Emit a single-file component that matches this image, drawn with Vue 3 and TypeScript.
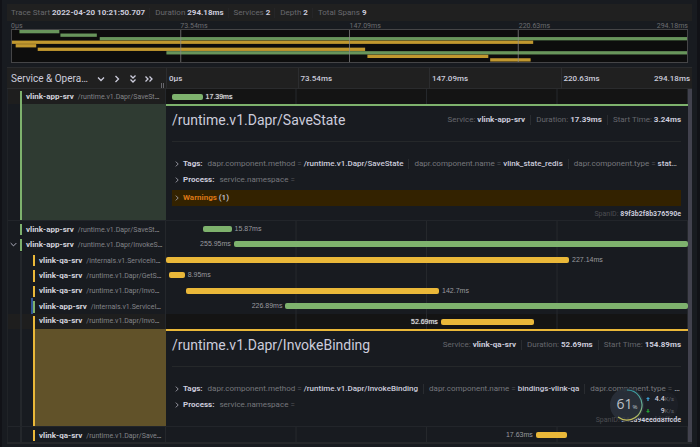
<script setup lang="ts">
interface Tag {
  key: string
  value: string
}

interface SpanDetail {
  title: string
  start: string
  tags: Tag[]
  warnings: number
  spanId: string
}

interface Span {
  service: string
  operation: string
  level: number
  color: 'green' | 'yellow'
  start: number
  duration: number
  labelSide: 'left' | 'right'
  expandable?: boolean
  linked?: boolean
  detail?: SpanDetail
}

const total = 294.18

const stats = [
  { label: 'Trace Start', value: '2022-04-20 10:21:50.707' },
  { label: 'Duration', value: '294.18ms' },
  { label: 'Services', value: '2' },
  { label: 'Depth', value: '2' },
  { label: 'Total Spans', value: '9' },
]

const ticks = ['0μs', '73.54ms', '147.09ms', '220.63ms']
const lastTick = '294.18ms'

const spans: Span[] = [
  {
    service: 'vlink-app-srv', operation: '/runtime.v1.Dapr/SaveSt', level: 0, color: 'green',
    start: 3.24, duration: 17.39, labelSide: 'right',
    detail: {
      title: '/runtime.v1.Dapr/SaveState',
      start: '3.24ms',
      tags: [
        { key: 'dapr.component.method', value: '/runtime.v1.Dapr/SaveState' },
        { key: 'dapr.component.name', value: 'vlink_state_redis' },
        { key: 'dapr.component.type', value: 'stat…' },
      ],
      warnings: 1,
      spanId: '89f3b2f8b376590e',
    },
  },
  { service: 'vlink-app-srv', operation: '/runtime.v1.Dapr/SaveSt', level: 0, color: 'green', start: 21.1, duration: 15.87, labelSide: 'right' },
  { service: 'vlink-app-srv', operation: '/runtime.v1.Dapr/InvokeS', level: 0, color: 'green', start: 38.23, duration: 255.95, labelSide: 'left', expandable: true },
  { service: 'vlink-qa-srv', operation: '/internals.v1.ServiceIn', level: 1, color: 'yellow', start: 0, duration: 227.14, labelSide: 'right' },
  { service: 'vlink-qa-srv', operation: '/runtime.v1.Dapr/GetS', level: 1, color: 'yellow', start: 1.6, duration: 8.95, labelSide: 'right' },
  { service: 'vlink-qa-srv', operation: '/runtime.v1.Dapr/Invo', level: 1, color: 'yellow', start: 11.2, duration: 142.7, labelSide: 'right' },
  { service: 'vlink-app-srv', operation: '/internals.v1.ServiceI', level: 1, color: 'green', start: 67.29, duration: 226.89, labelSide: 'left', linked: true },
  {
    service: 'vlink-qa-srv', operation: '/runtime.v1.Dapr/Invo', level: 1, color: 'yellow',
    start: 154.89, duration: 52.69, labelSide: 'left',
    detail: {
      title: '/runtime.v1.Dapr/InvokeBinding',
      start: '154.89ms',
      tags: [
        { key: 'dapr.component.method', value: '/runtime.v1.Dapr/InvokeBinding' },
        { key: 'dapr.component.name', value: 'bindings-vlink-qa' },
        { key: 'dapr.component.type', value: '…' },
      ],
      warnings: 0,
      spanId: '243a94eedd8ffcde',
    },
  },
  { service: 'vlink-qa-srv', operation: '/runtime.v1.Dapr/Save', level: 1, color: 'yellow', start: 208.4, duration: 17.63, labelSide: 'left' },
]

const groups: Span[][] = [spans.slice(0, 1), spans.slice(1, 8), spans.slice(8)]

const pct = (ms: number): string => `${(ms / total) * 100}%`

const labelStyle = (s: Span): Record<string, string> =>
  s.labelSide === 'right' ? { left: pct(s.start + s.duration) } : { right: pct(total - s.start) }
</script>

<template>
  <main class="panel">
    <header class="stats">
      <span v-for="s in stats" :key="s.label" class="stat">{{ s.label }} <b>{{ s.value }}</b></span>
    </header>

    <section class="minimap">
      <div class="mini-ticks">
        <span v-for="t in ticks" :key="t">{{ t }}</span>
        <span class="end">{{ lastTick }}</span>
      </div>
      <svg class="mini-chart" viewBox="0 0 294.18 34" preserveAspectRatio="none">
        <rect
          v-for="(s, i) in spans" :key="i" :class="s.color"
          :x="s.start" :y="i * 3.75" :width="s.duration" height="3.5"
        />
        <line v-for="n in 3" :key="n" class="mini-line" :x1="(total * n) / 4" :x2="(total * n) / 4" y1="0" y2="34" />
      </svg>
    </section>

    <section class="trace">
      <div class="head">
        <div class="head-name">
          <h2>Service &amp; Opera…</h2>
          <div class="tools">
            <button type="button" aria-label="Expand +1"><svg viewBox="0 0 10 10"><path d="M2 3.5 5 6.5 8 3.5" /></svg></button>
            <button type="button" aria-label="Collapse +1"><svg viewBox="0 0 10 10"><path d="M3.5 2 6.5 5 3.5 8" /></svg></button>
            <button type="button" aria-label="Expand all"><svg viewBox="0 0 10 10"><path d="M2.5 1.5 5 4 7.5 1.5M2.5 5.5 5 8 7.5 5.5" /></svg></button>
            <button type="button" aria-label="Collapse all"><svg viewBox="0 0 10 10"><path d="M1.5 2.5 4 5 1.5 7.5M5.5 2.5 8 5 5.5 7.5" /></svg></button>
          </div>
          <i class="grip"></i>
        </div>
        <div class="head-ticks">
          <span v-for="t in ticks" :key="t">{{ t }}</span>
          <span class="end">{{ lastTick }}</span>
        </div>
      </div>

      <div class="body">
        <div class="rows">
          <div v-for="(group, g) in groups" :key="g" class="group">
            <div :class="['spans', { many: group.length > 1 }]">
              <div v-for="(s, i) in group" :key="i" :class="['row', s.color, `level-${s.level}`, { open: s.detail }]">
                <div class="name">
                  <span class="gutter">
                    <button v-if="s.expandable" type="button" class="toggle" aria-label="Toggle children">
                      <svg viewBox="0 0 10 10"><path d="M1 3 5 7 9 3" /></svg>
                    </button>
                  </span>
                  <span v-if="s.level" :class="['guide', { linked: s.linked }]"></span>
                  <a href="#" class="label"><b>{{ s.service }}</b><small>{{ s.operation }}<em>…</em></small></a>
                </div>
                <div class="view">
                  <span class="bar" :style="{ left: pct(s.start), width: pct(s.duration) }"></span>
                  <span :class="['time', s.labelSide]" :style="labelStyle(s)">{{ s.duration }}ms</span>
                </div>
              </div>
            </div>

            <template v-for="(s, i) in group" :key="i">
              <div v-if="s.detail" :class="['detail', s.color, `level-${s.level}`]">
                <div class="name">
                  <span class="gutter"></span>
                  <span v-if="s.level" class="guide"></span>
                  <span class="fill"></span>
                </div>
                <article>
                  <div class="title">
                    <h3>{{ s.detail.title }}</h3>
                    <ul>
                      <li>Service: <b>{{ s.service }}</b></li>
                      <li>Duration: <b>{{ s.duration }}ms</b></li>
                      <li>Start Time: <b>{{ s.detail.start }}</b></li>
                    </ul>
                  </div>
                  <button type="button" class="fold">
                    <svg viewBox="0 0 10 10"><path d="M3 1 7 5 3 9" /></svg>
                    <strong>Tags:</strong>
                    <span v-for="t in s.detail.tags" :key="t.key" class="tag">{{ t.key }} <i>=</i> <b>{{ t.value }}</b></span>
                  </button>
                  <button type="button" class="fold">
                    <svg viewBox="0 0 10 10"><path d="M3 1 7 5 3 9" /></svg>
                    <strong>Process:</strong>
                    <span class="tag">service.namespace <i>=</i></span>
                  </button>
                  <button v-if="s.detail.warnings" type="button" class="fold warn">
                    <svg viewBox="0 0 10 10"><path d="M3 1 7 5 3 9" /></svg>
                    <span><strong>Warnings</strong> ({{ s.detail.warnings }})</span>
                  </button>
                  <footer>SpanID: <b>{{ s.detail.spanId }}</b></footer>
                </article>
              </div>
            </template>
          </div>
        </div>
        <div class="scroll"></div>
      </div>
    </section>

    <aside class="monitor">
      <div class="dial">
        <svg viewBox="0 0 34 34">
          <defs>
            <linearGradient id="ring" x1="0" y1="0" x2="0" y2="1">
              <stop offset="0" stop-color="#35a0a8" />
              <stop offset="0.55" stop-color="#6fae8c" />
              <stop offset="1" stop-color="#c6bd55" />
            </linearGradient>
          </defs>
          <path d="M17 2A15 15 0 1 1 8 29" />
        </svg>
        <span>61<small>%</small></span>
      </div>
      <div class="rates">
        <p><svg viewBox="0 0 6 6" class="up"><path d="M3 0 6 3H4V6H2V3H0Z" /></svg><b>4.4</b><small>K/s</small></p>
        <p><svg viewBox="0 0 6 6" class="down"><path d="M3 6 0 3H2V0H4V3H6Z" /></svg><b>9</b><small>K/s</small></p>
      </div>
    </aside>
  </main>
</template>

<style>
body {
  margin: 0;
  background: #111217;
}
</style>

<style scoped>
* {
  box-sizing: border-box;
}
.panel {
  position: relative;
  margin: 0 3px 0 2px;
  padding: 4px 5px 3px;
  background: #181b20;
  color: #ccccdc;
  font: 8px/10px Roboto, sans-serif;
}
h2, h3, p, ul {
  margin: 0;
  padding: 0;
  font-weight: 400;
}
button {
  margin: 0;
  padding: 0;
  border: 0;
  background: none;
  color: inherit;
  font: inherit;
  text-align: left;
}
svg {
  display: block;
  fill: none;
  stroke: currentColor;
}
b, strong {
  font-weight: 500;
}
.stats {
  display: flex;
  align-items: center;
  height: 17px;
  padding-left: 4px;
  background: #202020;
  color: #69696e;
}
.stat + .stat {
  margin-left: 4px;
  padding-left: 5px;
  border-left: 1px solid #252527;
}
.stats b {
  color: #ccccdc;
  font-weight: 700;
}
.minimap {
  padding: 0 4px;
}
.mini-ticks, .head-ticks {
  position: relative;
  display: grid;
  grid-template-columns: repeat(4, 1fr);
}
.mini-ticks {
  height: 8px;
  line-height: 10px;
  font-size: 7px;
  color: #6c6d71;
}
.end {
  position: absolute;
  right: 0;
}
.mini-chart {
  width: 100%;
  height: 34px;
  border: 1px solid #454547;
  background: #0d0d0d;
  stroke: none;
}
.mini-chart .green {
  fill: #68955b;
}
.mini-chart .yellow {
  fill: #c1982f;
}
.mini-line {
  stroke: #8b8b8b;
  stroke-width: 1;
  vector-effect: non-scaling-stroke;
  opacity: 0.7;
}
.trace {
  margin-top: 4px;
  border-bottom: 2px solid #25272a;
}
.head {
  display: grid;
  grid-template-columns: 159px 1fr;
  height: 22px;
  border-top: 1px solid #2a2b2d;
  border-bottom: 1px solid #2a2b2d;
  background: #202020;
}
.head-name {
  position: relative;
  display: flex;
  align-items: center;
  gap: 8px;
  padding-left: 4px;
}
.head h2 {
  font-size: 10px;
  line-height: 20px;
  white-space: nowrap;
}
.tools {
  display: flex;
  gap: 6px;
}
.tools svg {
  width: 10px;
  height: 10px;
  stroke-width: 1.3;
}
.grip {
  position: absolute;
  right: 2px;
  bottom: 1px;
  width: 3px;
  height: 5px;
  border: solid #68686e;
  border-width: 0 1px;
}
.head-ticks {
  font-size: 8px;
  font-weight: 500;
  line-height: 21px;
}
.head-ticks > span {
  padding-left: 2px;
  border-left: 1px solid #2c2d2f;
}
.head-ticks > .end {
  padding-right: 2px;
  border: 0;
}
.body {
  display: flex;
}
.rows {
  flex: 1;
  min-width: 0;
  border-left: 1px solid #202327;
}
.scroll {
  width: 4px;
  background: #42424e;
}
.spans {
  display: grid;
  grid-auto-rows: 1fr;
  height: 15px;
}
.spans.many {
  height: 108px;
}
.row, .detail {
  --tone: #7eb26d;
  --shade: #2f3b32;
  display: grid;
  grid-template-columns: 158px 1fr;
  min-height: 0;
}
.yellow {
  --tone: #eab839;
  --shade: #615229;
}
.name {
  display: flex;
  min-width: 0;
  border-right: 1px solid #24272b;
}
.gutter {
  display: flex;
  align-items: center;
  width: 12px;
  padding-left: 2px;
}
.toggle svg {
  width: 7px;
  height: 7px;
  stroke-width: 1.2;
}
.guide {
  width: 13px;
  border-left: 2px solid #24272b;
}
.guide.linked {
  border-right: 2px solid #2f5597;
}
.label {
  display: flex;
  align-items: center;
  gap: 4px;
  margin: 3px 0 1px;
  padding: 0 0 0 4px;
  border-left: 2px solid var(--tone);
  color: #d4d4de;
  font-size: 8px;
  line-height: 10px;
  white-space: nowrap;
  text-decoration: none;
}
.label b {
  font-weight: 700;
}
.label small {
  color: #838488;
  font-size: 7px;
}
.label em {
  color: #ccccdc;
  font-style: normal;
}
.open .label {
  margin: 2px 0 0;
  padding-bottom: 2px;
}
.view {
  position: relative;
  background: linear-gradient(to left, #25282c 1px, transparent 1px) 0 0 / 25% 100%;
}
.open {
  background: #1e1e1e;
}
.open .view {
  background-color: #141414;
}
.bar {
  position: absolute;
  top: 5px;
  height: 6px;
  border-radius: 2px;
  background: var(--tone);
}
.time {
  position: absolute;
  top: 3px;
  padding: 0 3px;
  color: #999a9f;
  font: 7px/10px "Liberation Sans", sans-serif;
}
.open .time {
  color: #e4e4e8;
  text-shadow: 0 0 1px #aaaaaa;
}
.detail {
  border-bottom: 1px solid #22252a;
}
.detail .name {
  border-right: 0;
}
.fill {
  flex: 1;
  border-left: 2px solid var(--tone);
  background: var(--shade);
}
article {
  min-width: 0;
  padding: 0 7px 1px 6px;
  border-top: 2px solid var(--tone);
}
.title {
  display: flex;
  align-items: center;
  justify-content: space-between;
  height: 36px;
  margin-bottom: 16px;
  padding-bottom: 8px;
  border-bottom: 1px solid #25282a;
}
h3 {
  font-size: 14px;
  line-height: 18px;
}
ul {
  display: flex;
  list-style: none;
  color: #66676d;
}
li + li {
  margin-left: 5px;
  padding-left: 5px;
  border-left: 1px solid #292c30;
}
.title b, footer b {
  color: #ccccdc;
  font-weight: 700;
}
.fold {
  display: flex;
  align-items: center;
  width: 100%;
  height: 12px;
  margin-bottom: 4px;
  padding-left: 2px;
  overflow: hidden;
  white-space: nowrap;
}
.fold svg {
  width: 6px;
  height: 6px;
  margin-right: 3px;
  stroke: #a0a0aa;
  stroke-width: 1.5;
}
.fold strong {
  font-weight: 700;
}
.tag {
  margin-left: 5px;
  color: #76777c;
}
.tag i {
  color: #55565b;
  font-style: normal;
}
.tag b {
  color: #ccccdc;
}
.tag + .tag {
  padding-left: 5px;
  border-left: 1px solid #292c30;
}
.fold.warn {
  height: 16px;
  margin-bottom: 3px;
  background: #332200;
  font-weight: 500;
}
.warn strong {
  color: #dd7716;
}
footer {
  color: #4c4d52;
  font-size: 7px;
  line-height: 10px;
  text-align: right;
}
.monitor {
  position: absolute;
  top: 388px;
  right: 19px;
  display: flex;
  align-items: center;
  border-radius: 17px;
}
.dial {
  position: relative;
  z-index: 1;
  display: grid;
  place-items: center;
  width: 34px;
  height: 34px;
  border-radius: 50%;
  background: #2a303aee;
  color: #bcc0c7;
}
.dial > * {
  grid-area: 1 / 1;
}
.dial svg {
  width: 34px;
  height: 34px;
}
.dial path {
  stroke: url(#ring);
  stroke-width: 1.2;
}
.dial span {
  font: 14px/16px "Open Sans", sans-serif;
}
.dial small {
  font-size: 6px;
}
.rates {
  width: 48px;
  margin-left: -14px;
  padding: 1px 4px 1px 16px;
  border-radius: 0 12px 12px 0;
  background: #1d2028d9;
}
.rates p {
  display: flex;
  align-items: center;
  height: 12px;
  font-size: 7px;
}
.rates svg {
  width: 4px;
  height: 4px;
  margin-right: auto;
  stroke: none;
}
.rates small {
  color: #60636c;
  font-size: 6px;
}
.up {
  fill: #3a9bd0;
}
.down {
  fill: #23a033;
}
</style>
